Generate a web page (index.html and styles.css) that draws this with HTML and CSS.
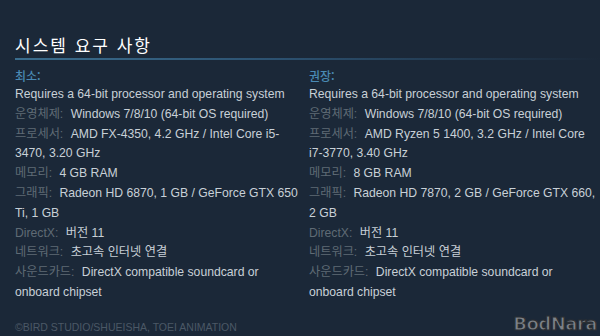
FILE: index.html
```html
<!DOCTYPE html>
<html lang="ko">
<head>
<meta charset="utf-8">
<link rel="stylesheet" href="styles.css">
</head>
<body>
<div class="page">
  <h2 class="title">시스템 요구 사항</h2>
  <div class="cols">
    <div class="col">
      <div class="head">최소:</div>
      <ul class="list">
        <li>Requires a 64-bit processor and operating system</li>
        <li><span class="lb">운영체제:</span> Windows 7/8/10 (64-bit OS required)</li>
        <li><span class="lb">프로세서:</span> AMD FX-4350, 4.2 GHz / Intel Core i5-3470, 3.20 GHz</li>
        <li><span class="lb">메모리:</span> 4 GB RAM</li>
        <li><span class="lb">그래픽:</span> Radeon HD 6870, 1 GB / GeForce GTX 650 Ti, 1 GB</li>
        <li><span class="lb">DirectX:</span> 버전 11</li>
        <li><span class="lb">네트워크:</span> 초고속 인터넷 연결</li>
        <li><span class="lb">사운드카드:</span> DirectX compatible soundcard or onboard chipset</li>
      </ul>
    </div>
    <div class="col">
      <div class="head">권장:</div>
      <ul class="list">
        <li>Requires a 64-bit processor and operating system</li>
        <li><span class="lb">운영체제:</span> Windows 7/8/10 (64-bit OS required)</li>
        <li><span class="lb">프로세서:</span> AMD Ryzen 5 1400, 3.2 GHz / Intel Core i7-3770, 3.40 GHz</li>
        <li><span class="lb">메모리:</span> 8 GB RAM</li>
        <li><span class="lb">그래픽:</span> Radeon HD 7870, 2 GB / GeForce GTX 660, 2 GB</li>
        <li><span class="lb">DirectX:</span> 버전 11</li>
        <li><span class="lb">네트워크:</span> 초고속 인터넷 연결</li>
        <li><span class="lb">사운드카드:</span> DirectX compatible soundcard or onboard chipset</li>
      </ul>
    </div>
  </div>
  <div class="copy">©BIRD STUDIO/SHUEISHA, TOEI ANIMATION</div>
</div>
<div class="logo">BodNara</div>
</body>
</html>
```
FILE: styles.css
```css
html, body {
  margin: 0;
  padding: 0;
  background: #1b2838;
  width: 600px;
  height: 336px;
  overflow: hidden;
}
body {
  position: relative;
  font-family: "Liberation Sans", Arial, "Noto Sans CJK KR", sans-serif;
}
.page {
  padding: 38px 0 0 15px;
}
.title {
  margin: 0;
  font-family: "Liberation Sans", "Noto Sans CJK KR", sans-serif;
  font-weight: normal;
  font-size: 17px;
  letter-spacing: 2px;
  color: #ffffff;
  line-height: 18px;
  padding-bottom: 2px;
  border-bottom: 2px solid;
  border-image: linear-gradient(to right, #3b6e8f 0%, #2c5170 45%, #1b2838 100%) 1;
}
.cols {
  display: grid;
  grid-template-columns: 284px 288px;
  column-gap: 10px;
  margin-top: 6px;
}
.head {
  color: #4a8ab4;
  font-size: 12px;
  line-height: 19px;
  font-weight: 500;
  font-family: "Noto Sans CJK KR", sans-serif;
}
.list {
  list-style: none;
  margin: 0;
  padding: 0;
  color: #c8d0d7;
  font-size: 12.2px;
  line-height: 19.8px;
}
.lb {
  color: #5f6b75;
  margin-right: 4px;
}
.copy {
  margin-top: 17px;
  font-size: 10.5px;
  color: #4b5866;
  line-height: 14px;
}
.logo {
  position: absolute;
  right: 3px;
  bottom: 2px;
  font-family: "DejaVu Sans", sans-serif;
  font-weight: bold;
  font-size: 18px;
  color: #7d8288;
  -webkit-text-stroke: 1.2px #2a2e33;
  letter-spacing: -0.5px;
}
```
